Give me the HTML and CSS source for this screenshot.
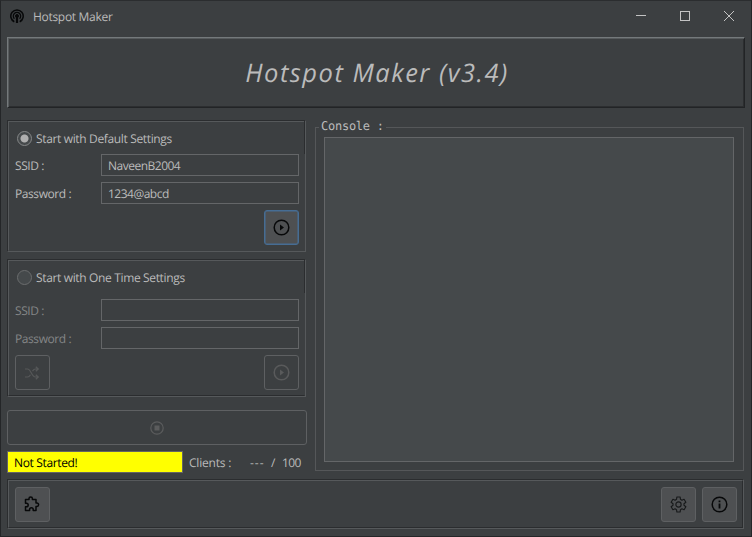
FILE: index.html
```html
<!DOCTYPE html>
<html lang="en">
<head>
<meta charset="utf-8">
<title>Hotspot Maker</title>
<link rel="stylesheet" href="styles.css">
</head>
<body>
<div class="window">
  <header class="titlebar">
    <svg class="app-icon" width="14" height="15" viewBox="0 0 14 15" fill="none" stroke="#070809">
      <path d="M4.3 12.7A6.2 6.2 0 1 1 9.7 12.7" stroke-width="1.5"/>
      <path d="M4.4 9.7A3.7 3.7 0 1 1 9.6 9.7" stroke-width="1.3"/>
      <circle cx="7" cy="7" r="1.5" fill="#070809"/><path d="M7 8v6" stroke-width="2.2"/>
    </svg>
    <span class="app-name">Hotspot Maker</span>
    <svg class="controls" width="98" height="10" viewBox="0 0 98 10" fill="none" stroke="#c3c3c3" shape-rendering="crispEdges">
      <path d="M0 4.5h10M44.500 .5h9v9h-9z"/><path d="M88 0l10 10M98 0l-10 10" shape-rendering="auto"/>
    </svg>
  </header>
  <h1 class="banner"><span>Hotspot Maker (v3.4)</span></h1>
  <main class="body">
    <section class="left">
      <div class="etched group default">
        <label class="radio"><i class="dot on"></i><span>Start with Default Settings</span></label>
        <div class="row"><span>SSID :</span><div class="field">NaveenB2004</div></div>
        <div class="row"><span>Password :</span><div class="field">1234@abcd</div></div>
        <div class="actions end">
          <button class="btn focus"><svg width="17" height="17" viewBox="0 0 17 17" fill="none" stroke="#070809" stroke-width="1.5"><circle cx="8.500" cy="8.500" r="7.300"/><path d="M7 5.500l4 3-4 3z" fill="#070809" stroke="none"/></svg></button>
        </div>
      </div>
      <div class="etched group once">
        <label class="radio"><i class="dot"></i><span>Start with One Time Settings</span></label>
        <div class="row off"><span>SSID :</span><div class="field"></div></div>
        <div class="row off"><span>Password :</span><div class="field"></div></div>
        <div class="actions">
          <button class="btn disabled"><svg class="shuffle" width="16" height="14" viewBox="0 0 16 14" fill="none" stroke="#565859" stroke-width="1.2"><path d="M1 3h2.500c3.500 0 4 8 8 8H14M1 11h2.500c1.300 0 2.200-1 3-2.300M8.500 5.200C9.300 4 10 3 11.500 3H14M11.800.7L14.300 3l-2.500 2.300M11.800 8.700l2.500 2.300-2.500 2.300"/></svg></button>
          <button class="btn disabled"><svg width="17" height="17" viewBox="0 0 17 17" fill="none" stroke="#595a5b" stroke-width="1.5"><circle cx="8.500" cy="8.500" r="7.300"/><path d="M7 5.500l4 3-4 3z" fill="#595a5b" stroke="none"/></svg></button>
        </div>
      </div>
      <button class="btn stop disabled"><svg width="14" height="14" viewBox="0 0 14 14" fill="none" stroke="#5b5c5d" stroke-width="1.200"><circle cx="7" cy="7" r="6.200"/><path d="M4.500 4.500h5v5h-5z" fill="#5b5c5d" stroke="none"/></svg></button>
      <div class="status">
        <div class="state">Not Started!</div>
        <span class="clients">Clients :</span>
        <span class="dash">---</span><span class="slash">/</span><span class="max">100</span>
      </div>
    </section>
    <fieldset class="console">
      <legend>Console :</legend>
      <div class="output"></div>
    </fieldset>
  </main>
  <footer class="etched toolbar">
    <button class="btn"><svg class="puzzle" width="16" height="16" viewBox="0 0 16 16" fill="none" stroke="#070809" stroke-width="1.500" stroke-linejoin="round"><path d="M1.500 3.500H5V2.600a1.700 1.700 0 0 1 3.400 0v.9H12V7h.9a1.700 1.700 0 0 1 0 3.400H12v4H9.200v-.8a1.800 1.800 0 0 0-3.600 0v.8H1.500v-3.600h.9a1.800 1.800 0 0 0 0-3.600h-.9z"/></svg></button>
    <span class="spacer"></span>
    <button class="btn"><svg width="17" height="17" viewBox="0 0 18 18" fill="none" stroke="#17191a" stroke-width="1.200" stroke-linejoin="round"><path d="M7.300 1h3.400l.4 2.500 1.500.9 2.300-.9 1.900 3.100-2 1.600v1.600l2 1.600-1.900 3.100-2.300-.9-1.500.9-.4 2.500H7.300l-.4-2.500-1.500-.9-2.300.9-1.900-3.100 2-1.600V8.200l-2-1.600 1.900-3.100 2.300.9 1.500-.9z"/><circle cx="9" cy="9" r="2.800"/></svg></button>
    <button class="btn"><svg width="17" height="17" viewBox="0 0 17 17" fill="none" stroke="#070809" stroke-width="1.500"><circle cx="8.500" cy="8.500" r="7.300"/><path d="M8.500 7.500v5M8.500 4.500v1.800" stroke-width="1.800"/></svg></button>
  </footer>
</div>
</body>
</html>
```
FILE: styles.css
```css
* { box-sizing: border-box; }
body { margin: 0; background: #3c3f41; color: #bbbbbb; font: 12px/16px "Open Sans", "Noto Sans", sans-serif; letter-spacing: -.35px; text-rendering: geometricPrecision; }
.window { width: 752px; height: 537px; border: 1px solid #242628; border-top-color: #2b2d2f; padding: 0 6px; overflow: hidden; }
span, .field, .state { white-space: pre; }
.titlebar { height: 36px; display: flex; align-items: flex-start; padding: 8px 11px 0 3px; }
.app-name { margin: 0 auto 0 9px; letter-spacing: -.3px; }
.controls { margin-top: 2px; }
.banner { width: 738px; height: 71px; margin: 0; border: 1px solid; border-color: #74797b #222426 #222426 #74797b; box-shadow: inset 1px 1px #575b5d, inset -1px -1px #2c2e30; display: flex; justify-content: center; align-items: center; font: italic 400 25.5px/34px "Open Sans", sans-serif; letter-spacing: 1.5px; }
.banner span { margin-left: 2px; }
.body { display: flex; height: 359px; margin-top: 12px; }
.left { width: 300px; margin-right: 8px; }
.etched { position: relative; border: 1px solid; border-color: #2b2d2f #56595b #56595b #2b2d2f; }
.etched::before { content: ""; position: absolute; inset: 0; border: 1px solid; border-color: #56595b transparent transparent #56595b; pointer-events: none; }
.group { width: 299px; padding: 0 6px 0 7px; }
.group::after { content: ""; position: absolute; top: 0; right: 0; width: 1px; height: 33px; background: #2b2d2f; }
.default { height: 132px; }
.once { height: 138px; margin-top: 7px; }
.once::before { border-bottom-color: #2b2d2f; }
.radio { display: flex; align-items: center; height: 17px; margin: 9px 0 7px 2px; }
.once .radio { margin-bottom: 13px; }
.dot { width: 15px; height: 15px; border: 1px solid #6b6d6e; border-radius: 50%; background: #45494b; margin-right: 4px; }
.on { background: radial-gradient(circle, #afafaf 0 3.500px, #45494b 4.500px); border-color: #858788; }
.row { display: flex; height: 22px; align-items: center; margin-bottom: 6px; }
.row > span { width: 86px; padding-top: 2px; letter-spacing: -.42px; }
.off { color: #848687; }
.field { width: 198px; height: 22px; border: 1px solid #646668; padding: 3px 6px; letter-spacing: -.5px; }
.actions { display: flex; justify-content: space-between; width: 284px; }
.end { justify-content: flex-end; }
.btn { width: 35px; height: 35px; padding: 0; border: 1px solid #5e6062; border-radius: 3px; background: #4e5052; display: flex; align-items: center; justify-content: center; }
.disabled { background: transparent; }
.focus { border-color: #466d94; box-shadow: inset 0 0 0 .5px #466d94; }
.shuffle, .puzzle { margin-right: 1px; }
.stop { width: 300px; margin-top: 13px; }
.status { display: flex; height: 22px; margin-top: 6px; align-items: center; }
.status > span { padding-top: 2px; }
.state { width: 176px; height: 22px; background: #ffff00; color: #000; border: 1px solid #646464; padding: 3px 6px; margin-right: 6px; }
.clients { width: 61px; letter-spacing: -.2px; }
.dash { width: 21px; letter-spacing: 1px; }
.slash { width: 11px; }
.max { letter-spacing: -.6px; }
.console { margin: 0; min-width: 0; width: 429px; height: 351px; border: 1px solid #555759; padding: 3px 9px 8px 8px; }
.console legend { padding: 0 2px; margin-left: -5px; font: 12px/12px "DejaVu Sans Mono", monospace; letter-spacing: -.25px; height: 14px; }
.output { width: 410px; height: 325px; border: 1px solid #646668; background: #45494b; }
.toolbar { width: 737px; height: 50px; display: flex; align-items: center; padding: 0 6px 0 7px; gap: 6px; }
.toolbar::before { border-color: #56595b #2b2d2f #2b2d2f #56595b; }
.spacer { flex: 1; }
```
